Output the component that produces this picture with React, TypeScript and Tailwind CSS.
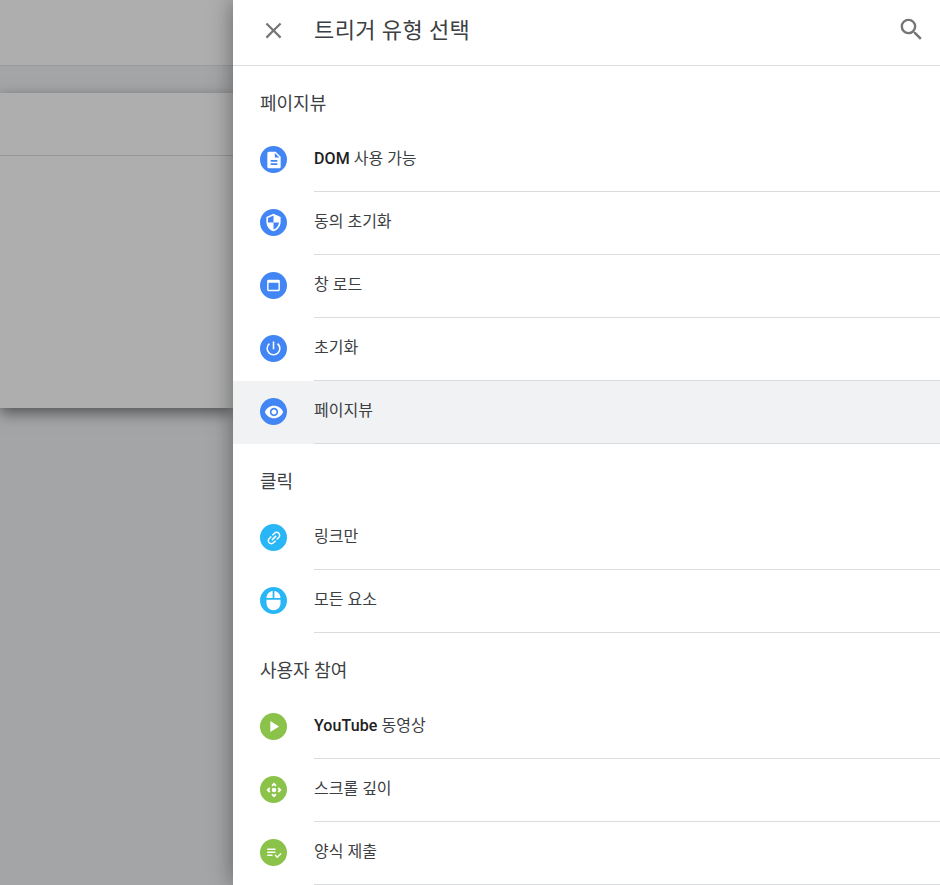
import type { IconType } from 'react-icons'
import {
  MdClose,
  MdControlCamera,
  MdDescription,
  MdLink,
  MdMouse,
  MdPlayArrow,
  MdPlaylistAddCheck,
  MdPowerSettingsNew,
  MdSearch,
  MdSecurity,
  MdVisibility,
  MdWebAsset,
} from 'react-icons/md'

type Trigger = {
  label: string
  bold?: string
  icon: IconType
  size: number
  iconClass?: string
  active?: boolean
}

type Section = {
  title: string
  color: string
  items: Trigger[]
}

const sections: Section[] = [
  {
    title: '페이지뷰',
    color: 'bg-[#4285f4]',
    items: [
      { bold: 'DOM', label: ' 사용 가능', icon: MdDescription, size: 20 },
      { label: '동의 초기화', icon: MdSecurity, size: 19 },
      { label: '창 로드', icon: MdWebAsset, size: 17 },
      { label: '초기화', icon: MdPowerSettingsNew, size: 19 },
      { label: '페이지뷰', icon: MdVisibility, size: 20, active: true },
    ],
  },
  {
    title: '클릭',
    color: 'bg-[#29b6f6]',
    items: [
      { label: '링크만', icon: MdLink, size: 18, iconClass: '-rotate-45' },
      { label: '모든 요소', icon: MdMouse, size: 21 },
    ],
  },
  {
    title: '사용자 참여',
    color: 'bg-[#8bc34a]',
    items: [
      { bold: 'YouTube', label: ' 동영상', icon: MdPlayArrow, size: 19 },
      { label: '스크롤 깊이', icon: MdControlCamera, size: 18 },
      { label: '양식 제출', icon: MdPlaylistAddCheck, size: 18 },
    ],
  },
]

function TriggerRow({ item, color }: { item: Trigger; color: string }) {
  const Icon = item.icon
  return (
    <div className={`flex h-[63px] pl-[27px] ${item.active ? 'bg-[#f1f2f4]' : ''}`}>
      <div className="flex w-[54px] shrink-0 items-center pb-[2px]">
        <span className={`flex h-[27px] w-[27px] items-center justify-center rounded-full text-white ${color}`}>
          <Icon size={item.size} className={item.iconClass} />
        </span>
      </div>
      <div className="flex flex-1 items-center border-b border-[#dadce0] pb-[3px] text-[16px] text-[#3c4043]">
        {item.bold && <span className="font-medium tracking-[0.1px] text-[#212121]">{item.bold}</span>}
        <span className="whitespace-pre">{item.label}</span>
      </div>
    </div>
  )
}

export default function App() {
  return (
    <div
      className="flex h-[885px] w-[940px] overflow-hidden bg-[#a4a5a7]"
      style={{ fontFamily: 'Roboto, "Noto Sans CJK KR", sans-serif' }}
    >
      {/* Dimmed page behind the drawer */}
      <div className="w-[233px] shrink-0">
        <div className="h-[66px] border-b border-[#999a9b] bg-[#aeaeae]" />
        <div className="mt-[27px] h-[315px] bg-[#aeaeae] shadow-[0_5px_14px_rgba(0,0,0,0.5)]">
          <div className="h-[63px] border-b border-[#959595]" />
        </div>
      </div>

      {/* Trigger type drawer */}
      <div className="relative z-10 w-[707px] shrink-0 bg-white shadow-[0_0_22px_rgba(0,0,0,0.42)]">
        <header className="flex h-[66px] items-center border-b border-[#dadce0] pl-[27px] pr-[14px]">
          <div className="flex w-[54px] shrink-0 items-center pb-[4px]">
            <MdClose size={27} className="text-[#757575]" />
          </div>
          <h1 className="flex-1 pb-[5px] text-[22px] font-normal tracking-[0.4px] text-[#3c4043]">트리거 유형 선택</h1>
          <MdSearch size={29} className="mb-[6px] text-[#757575]" />
        </header>

        {sections.map((section) => (
          <section key={section.title}>
            <h2 className="flex h-[63px] items-center pt-[11px] pl-[27px] text-[18px] font-normal text-[#3c4043]">
              {section.title}
            </h2>
            {section.items.map((item) => (
              <TriggerRow key={item.label} item={item} color={section.color} />
            ))}
          </section>
        ))}
      </div>
    </div>
  )
}
